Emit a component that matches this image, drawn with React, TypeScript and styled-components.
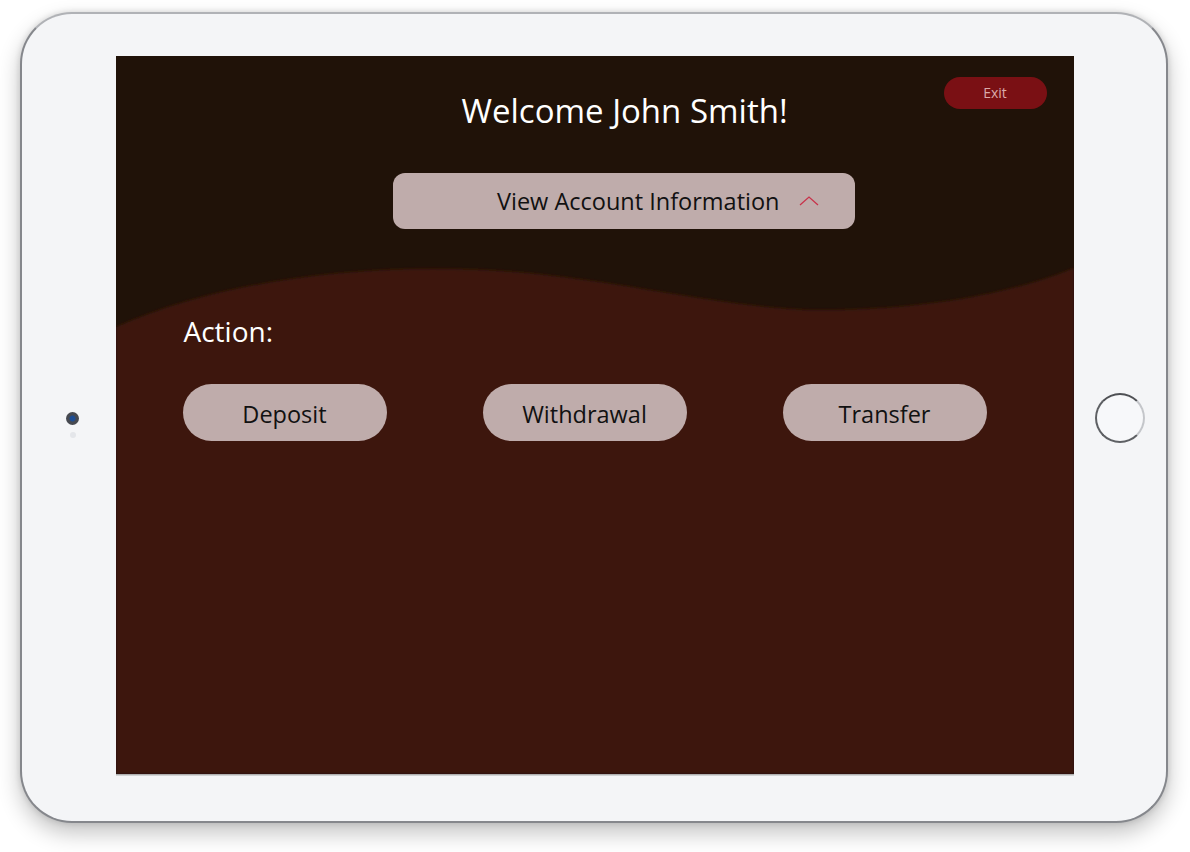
import React from "react";
import styled, { createGlobalStyle } from "styled-components";

const GlobalStyle = createGlobalStyle`
  html, body {
    margin: 0;
    padding: 0;
    background: #ffffff;
    font-family: "Open Sans", "Noto Sans", sans-serif;
  }
`;

const ACTIONS = ["Deposit", "Withdrawal", "Transfer"];

const App = () => {
  return (
    <>
      <GlobalStyle />
      <Page>
        <Device>
          <LeftSide>
            <Camera />
            <Sensor />
          </LeftSide>

          <Screen>
            <Wave viewBox="0 0 958 718" preserveAspectRatio="none">
              <defs>
                <filter id="soft" x="-5%" y="-5%" width="110%" height="110%">
                  <feGaussianBlur stdDeviation="1.6" />
                </filter>
              </defs>
              <path
                d="M0 271 C 110 222, 260 205, 400 216 C 520 226, 620 256, 720 254 C 820 252, 900 236, 958 212 L 958 718 L 0 718 Z"
                fill="#3d1209"
                filter="url(#soft)"
              />
            </Wave>

            <ExitButton>Exit</ExitButton>

            <Content>
              <Title>Welcome John Smith!</Title>

              <AccountButton>
                <AccountLabel>View Account Information</AccountLabel>
                <svg width="20" height="11" viewBox="0 0 20 11">
                  <path
                    d="M1 10 L10 2 L19 10"
                    fill="none"
                    stroke="#c8324a"
                    strokeWidth="1.3"
                  />
                </svg>
              </AccountButton>

              <ActionSection>
                <ActionTitle>Action:</ActionTitle>
                <ActionRow>
                  {ACTIONS.map((name) => (
                    <ActionButton key={name}>{name}</ActionButton>
                  ))}
                </ActionRow>
              </ActionSection>
            </Content>
          </Screen>

          <RightSide>
            <HomeButton />
          </RightSide>
        </Device>
      </Page>
    </>
  );
};

export default App;

const Page = styled.div`
  width: 1190px;
  height: 852px;
  box-sizing: border-box;
  padding: 12px 0 0 20px;
  background: #ffffff;
`;

const Device = styled.div`
  width: 1148px;
  height: 811px;
  box-sizing: border-box;
  display: flex;
  align-items: stretch;
  padding: 41.5px 0 46.5px 0;
  background: #f4f5f7;
  border: 2.5px solid #85878c;
  border-top-color: #b0b2b6;
  border-radius: 52px;
  box-shadow: 0 10px 22px rgba(0, 0, 0, 0.24), 0 0 6px rgba(0, 0, 0, 0.14);
`;

const LeftSide = styled.div`
  width: 93.5px;
  box-sizing: border-box;
  display: flex;
  flex-direction: column;
  align-items: center;
  justify-content: center;
  gap: 7px;
  padding: 20px 0 0 8px;
`;

const Camera = styled.div`
  width: 13px;
  height: 13px;
  border-radius: 50%;
  background: radial-gradient(circle, #1d4c92 0 2.5px, #464950 3.5px);
`;

const Sensor = styled.div`
  width: 6px;
  height: 6px;
  border-radius: 50%;
  background: #e4e6ea;
`;

const RightSide = styled.div`
  flex: 1;
  display: flex;
  align-items: center;
  justify-content: center;
  padding-top: 6px;
`;

const HomeButton = styled.div`
  width: 46px;
  height: 46px;
  border-radius: 50%;
  border: 2px solid #5e6064;
  border-right-color: #c4c6ca;
  border-top-color: #4e5054;
  background: #f7f8fa;
`;

const Screen = styled.div`
  position: relative;
  width: 958px;
  height: 718px;
  flex-shrink: 0;
  overflow: hidden;
  background: #201208;
  box-shadow: 0 1.5px 0 rgba(120, 120, 120, 0.55);
`;

const Wave = styled.svg`
  position: absolute;
  inset: 0;
  width: 100%;
  height: 100%;
`;

const ExitButton = styled.button`
  position: absolute;
  top: 21px;
  right: 27px;
  width: 103px;
  height: 32px;
  border: none;
  border-radius: 16px;
  background: #7a1014;
  color: #dbaaaa;
  font-family: "Open Sans", sans-serif;
  font-size: 14px;
`;

const Content = styled.div`
  position: relative;
  display: flex;
  flex-direction: column;
  padding-top: 32px;
`;

const Title = styled.h1`
  margin: 0 0 0 346px;
  width: 324px;
  text-align: center;
  white-space: nowrap;
  color: #ffffff;
  font-size: 33px;
  font-weight: 400;
  line-height: 46px;
`;

const AccountButton = styled.div`
  margin: 39px 0 0 277px;
  width: 462px;
  height: 56px;
  box-sizing: border-box;
  border-radius: 12px;
  background: #bfacab;
  display: flex;
  align-items: center;
  justify-content: flex-end;
  gap: 19px;
  padding-right: 36px;
`;

const AccountLabel = styled.span`
  color: #111;
  font-size: 23.5px;
  line-height: 30px;
`;

const ActionSection = styled.div`
  margin-top: 83px;
  padding-left: 67px;
  display: flex;
  flex-direction: column;
`;

const ActionTitle = styled.h2`
  margin: 0 0 0 1px;
  color: #ffffff;
  font-size: 28px;
  font-weight: 400;
  line-height: 38px;
`;

const ActionRow = styled.div`
  margin-top: 34px;
  display: flex;
  gap: 96px;
`;

const ActionButton = styled.button`
  width: 204px;
  height: 57px;
  padding: 3px 0 0;
  border: none;
  border-radius: 29px;
  background: #bfacab;
  color: #111;
  font-family: "Open Sans", sans-serif;
  font-size: 23.5px;
`;
